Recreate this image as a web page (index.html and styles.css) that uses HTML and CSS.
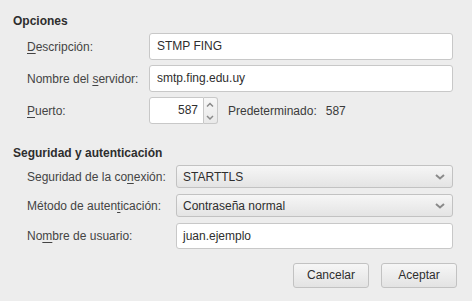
FILE: index.html
```html
<!DOCTYPE html>
<html lang="es">
<head>
<meta charset="utf-8">
<title>Opciones</title>
<link rel="stylesheet" href="styles.css">
</head>
<body>
<div class="dialog">
  <div class="section-title">Opciones</div>
  <div class="grid grid-options">
    <div class="label"><u>D</u>escripción:</div>
    <div class="entry">STMP FING</div>

    <div class="label">Nombre del <u>s</u>ervidor:</div>
    <div class="entry">smtp.fing.edu.uy</div>

    <div class="label"><u>P</u>uerto:</div>
    <div class="port-row">
      <div class="spin">
        <div class="entry spin-entry">587</div>
        <div class="spin-buttons">
          <svg width="14" height="27" viewBox="0 0 14 27" aria-hidden="true">
            <polyline points="4,9.5 7,6.5 10,9.5" fill="none" stroke="#8a8a8a" stroke-width="1.5"/>
            <polyline points="4,19 7,22 10,19" fill="none" stroke="#8a8a8a" stroke-width="1.5"/>
          </svg>
        </div>
      </div>
      <div class="default-label">Predeterminado:</div>
      <div class="default-value">587</div>
    </div>
  </div>

  <div class="section-title section-second">Seguridad y autenticación</div>
  <div class="grid grid-security">
    <div class="label">Seguridad de la co<u>n</u>exión:</div>
    <div class="combo">
      <span>STARTTLS</span>
      <svg class="chevron" width="10" height="6" viewBox="0 0 10 6" aria-hidden="true">
        <polyline points="1,1 5,4.5 9,1" fill="none" stroke="#8a8a8a" stroke-width="2"/>
      </svg>
    </div>

    <div class="label">Método de auten<u>t</u>icación:</div>
    <div class="combo">
      <span>Contraseña normal</span>
      <svg class="chevron" width="10" height="6" viewBox="0 0 10 6" aria-hidden="true">
        <polyline points="1,1 5,4.5 9,1" fill="none" stroke="#8a8a8a" stroke-width="2"/>
      </svg>
    </div>

    <div class="label">No<u>m</u>bre de usuario:</div>
    <div class="entry user-entry">juan.ejemplo</div>
  </div>

  <div class="buttons">
    <div class="button">Cancelar</div>
    <div class="button">Aceptar</div>
  </div>
</div>
</body>
</html>
```
FILE: styles.css
```css
html, body {
  margin: 0;
  padding: 0;
  background: #ededed;
}

body {
  width: 472px;
  height: 301px;
  overflow: hidden;
  font-family: "Liberation Sans", Arial, sans-serif;
  font-size: 12px;
  color: #3b3b3b;
}

.dialog {
  padding: 13px 15px 0 13px;
}

.section-title {
  font-weight: bold;
  line-height: 16px;
  height: 16px;
  color: #2e2e2e;
  margin-bottom: 4px;
}

.section-second {
  margin-top: 21px;
}

.grid {
  display: grid;
  margin-left: 14px;
  margin-right: 4px;
  row-gap: 5px;
  align-items: center;
}

.grid-options {
  grid-template-columns: 122px 1fr;
  grid-auto-rows: 27px;
}

.grid-security {
  grid-template-columns: 149px 1fr;
  grid-template-rows: 23px 23px 26px;
  row-gap: 6px;
}

.label {
  color: #444;
  white-space: nowrap;
}

.label u {
  text-decoration-thickness: 1px;
  text-underline-offset: 2px;
}

.entry {
  box-sizing: border-box;
  height: 27px;
  line-height: 25px;
  padding: 0 7px;
  background: #fff;
  border: 1px solid #c8c8c8;
  border-radius: 3px;
  color: #2e2e2e;
  white-space: nowrap;
  overflow: hidden;
}

.user-entry {
  height: 26px;
  line-height: 24px;
  padding-left: 6px;
}

.port-row {
  display: flex;
  align-items: center;
  height: 27px;
}

.spin {
  display: flex;
  height: 27px;
}

.spin-entry {
  width: 55px;
  text-align: right;
  padding: 0 5px;
  border-radius: 3px 0 0 3px;
}

.spin-buttons {
  box-sizing: border-box;
  width: 14px;
  height: 27px;
  border: 1px solid #c8c8c8;
  border-left: none;
  border-radius: 0 3px 3px 0;
  background: linear-gradient(#f7f7f7, #e9e9e9);
}

.spin-buttons svg {
  display: block;
  margin: -1px 0 0 -1px;
}

.default-label {
  margin-left: 10px;
  color: #3b3b3b;
}

.default-value {
  margin-left: 9px;
  color: #3b3b3b;
}

.combo {
  box-sizing: border-box;
  height: 23px;
  display: flex;
  align-items: center;
  justify-content: space-between;
  padding: 0 7px 0 6px;
  border: 1px solid #c2c2c2;
  border-radius: 3px;
  background: linear-gradient(#f6f6f6, #e4e4e4);
  color: #2e2e2e;
}

.chevron {
  display: block;
}

.buttons {
  display: flex;
  justify-content: flex-end;
  gap: 12px;
  margin-top: 14px;
}

.button {
  box-sizing: border-box;
  width: 76px;
  height: 25px;
  line-height: 23px;
  text-align: center;
  border: 1px solid #c2c2c2;
  border-radius: 3px;
  background: linear-gradient(#f6f6f6, #e3e3e3);
  color: #2e2e2e;
}
```
